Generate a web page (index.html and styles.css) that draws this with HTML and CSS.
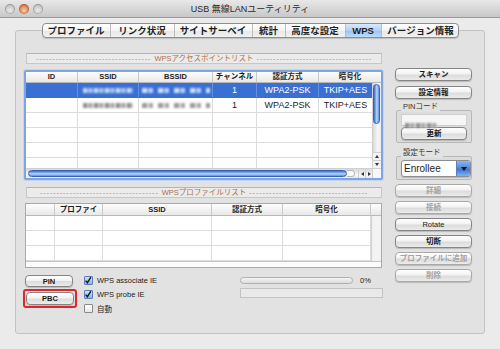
FILE: index.html
```html
<!DOCTYPE html>
<html lang="ja">
<head>
  <meta charset="UTF-8">
  <title>USB 無線LANユーティリティ</title>
  <link rel="stylesheet" href="styles.css">
</head>
<body>
  <div class="titlebar">
    <div class="lights">
      <span class="light"></span>
      <span class="light close"></span>
      <span class="light"></span>
    </div>
    <div class="title">USB 無線LANユーティリティ</div>
    <div></div>
  </div>

  <div class="tabs">
    <div class="tab">プロファイル</div>
    <div class="tab">リンク状況</div>
    <div class="tab">サイトサーベイ</div>
    <div class="tab">統計</div>
    <div class="tab">高度な設定</div>
    <div class="tab active">WPS</div>
    <div class="tab">バージョン情報</div>
  </div>

  <div class="panel">
    <div class="left">
      <div class="list-title">
        <span class="dashes">-----------------------------------</span>
        <span>WPSアクセスポイントリスト</span>
        <span class="dashes">-----------------------------------</span>
      </div>

      <div class="ap-table">
        <div class="thead ap-cols">
          <div>ID</div><div>SSID</div><div>BSSID</div><div>チャンネル</div><div>認証方式</div><div>暗号化</div>
        </div>
        <div class="tbody">
          <div class="row ap-cols selected">
            <div></div>
            <div><span class="blur"></span></div>
            <div><span class="blur mac"></span></div>
            <div>1</div><div>WPA2-PSK</div><div>TKIP+AES</div>
          </div>
          <div class="row ap-cols">
            <div></div>
            <div><span class="blur"></span></div>
            <div><span class="blur mac"></span></div>
            <div>1</div><div>WPA2-PSK</div><div>TKIP+AES</div>
          </div>
          <div class="row ap-cols"><div></div><div></div><div></div><div></div><div></div><div></div></div>
          <div class="row ap-cols"><div></div><div></div><div></div><div></div><div></div><div></div></div>
          <div class="row ap-cols"><div></div><div></div><div></div><div></div><div></div><div></div></div>
          <div class="row ap-cols"><div></div><div></div><div></div><div></div><div></div><div></div></div>
        </div>
        <div class="vscroll">
          <div class="vthumb"></div>
          <div class="arrows-v">
            <span class="arrow up"></span>
            <span class="arrow down"></span>
          </div>
        </div>
        <div class="hscroll">
          <div class="hthumb"></div>
          <div class="htrack-end"></div>
          <div class="arrows-h">
            <span class="arrow left"></span>
            <span class="arrow right"></span>
          </div>
        </div>
        <div class="corner"></div>
      </div>

      <div class="list-title second">
        <span class="dashes">------------------------------------</span>
        <span>WPSプロファイルリスト</span>
        <span class="dashes">------------------------------------</span>
      </div>

      <div class="profile-table">
        <div class="thead pf-cols">
          <div></div><div>プロファイ</div><div>SSID</div><div>認証方式</div><div>暗号化</div><div></div>
        </div>
        <div class="pf-body">
          <div class="row pf-cols"><div></div><div></div><div></div><div></div><div></div></div>
          <div class="row pf-cols"><div></div><div></div><div></div><div></div><div></div></div>
          <div class="row pf-cols"><div></div><div></div><div></div><div></div><div></div></div>
        </div>
        <div class="pf-side"></div>
        <div class="pf-bottom"></div>
      </div>

      <div class="wps-bottom">
        <div class="wps-buttons">
          <button class="btn pin-btn">PIN</button>
          <div class="pbc-mark"><button class="btn">PBC</button></div>
        </div>
        <div class="checks">
          <div class="check">
            <span class="box checked"><svg width="9" height="9" viewBox="0 0 9 9"><path d="M1.8 4.6 L3.8 7 L7.8 0.8" fill="none" stroke="#1b1b1b" stroke-width="1.6"/></svg></span>
            WPS associate IE
          </div>
          <div class="check">
            <span class="box checked"><svg width="9" height="9" viewBox="0 0 9 9"><path d="M1.8 4.6 L3.8 7 L7.8 0.8" fill="none" stroke="#1b1b1b" stroke-width="1.6"/></svg></span>
            WPS probe IE
          </div>
          <div class="check">
            <span class="box"></span>
            自動
          </div>
        </div>
        <div class="status">
          <div class="progress-row">
            <div class="progress"></div>
            <span class="pct">0%</span>
          </div>
          <div class="status-field"></div>
        </div>
      </div>
    </div>

    <div class="side">
      <button class="btn">スキャン</button>
      <button class="btn gap-5">設定情報</button>

      <div class="group pin-group">
        <div class="group-title"><span>PINコード</span></div>
        <div class="group-box">
          <div class="pin-field"><span class="blur pin-blur"></span></div>
          <button class="btn renew">更新</button>
        </div>
      </div>

      <div class="group mode-group">
        <div class="group-title"><span>設定モード</span></div>
        <div class="group-box">
          <div class="select">
            <span class="select-text">Enrollee</span>
            <span class="select-arrow"></span>
          </div>
        </div>
      </div>

      <button class="btn gap-4" disabled>詳細</button>
      <button class="btn gap-4" disabled>接続</button>
      <button class="btn gap-4 plain">Rotate</button>
      <button class="btn gap-4">切断</button>
      <button class="btn gap-4" disabled>プロファイルに追加</button>
      <button class="btn gap-4" disabled>削除</button>
    </div>
  </div>
</body>
</html>
```

FILE: styles.css
```css
* {
  box-sizing: border-box;
}
body {
  margin: 0;
  width: 500px;
  height: 349px;
  overflow: hidden;
  background-color: #ebebeb;
  font-family: "Liberation Sans", "Noto Sans CJK JP", sans-serif;
  color: #1e1e1e;
}

/* window title */
.titlebar {
  height: 18px;
  display: grid;
  grid-template-columns: 1fr auto 1fr;
  align-items: center;
  background: linear-gradient(#e8e8e8, #c8c8c8);
  border-bottom: 1px solid #9a9a9a;
}
.lights {
  display: flex;
  gap: 4px;
  padding-left: 5px;
}
.light {
  width: 10px;
  height: 10px;
  border-radius: 50%;
  background: radial-gradient(circle at 50% 65%, #ececec, #c6c6c6 60%, #a2a2a2);
  box-shadow: inset 0 0 0 1px rgba(0, 0, 0, 0.18);
}
.light.close {
  background: radial-gradient(circle at 50% 65%, #f9cfa8, #e07d50 60%, #b0502c);
}
.title {
  font-size: 9px;
  color: #2a2a2a;
}

/* tabs */
.tabs {
  position: relative;
  display: grid;
  grid-template-columns: 67px 64px 78px 33px 60px 36px 79px;
  width: 417px;
  height: 15px;
  margin: 5px auto -8px;
  overflow: hidden;
  background: linear-gradient(#ffffff, #f4f4f4 50%, #e7e7e7 51%, #f1f1f1);
  border: 1px solid #8d8d8d;
  border-radius: 4px;
  box-shadow: 0 1px 1px rgba(0, 0, 0, 0.15);
}
.tab {
  font-size: 9.5px;
  font-weight: bold;
  line-height: 13px;
  text-align: center;
  white-space: nowrap;
  border-left: 1px solid #bcbcbc;
}
.tab:first-child {
  border-left: 0;
}
.tab.active {
  background: linear-gradient(#d9eafc, #b0d1f6 50%, #97c2f2 51%, #bcdcfb);
}

/* main panel */
.panel {
  display: flex;
  gap: 12px;
  height: 304px;
  margin: 0 15px;
  padding: 22px 12px 0 8px;
  background-color: #e2e2e2;
  border: 1px solid #c2c2c2;
  border-radius: 3px;
}
.left {
  width: 359px;
}
.side {
  width: 77px;
  padding-top: 15px;
  display: flex;
  flex-direction: column;
}

.list-title {
  display: flex;
  align-items: center;
  justify-content: center;
  gap: 3px;
  height: 11px;
  margin: 0 1px 0 2px;
  font-size: 7.5px;
  line-height: 9px;
  color: #a8734c;
  white-space: nowrap;
  background-color: #ebebeb;
  border: 1px solid #c7c7c7;
  border-top-color: #b5b5b5;
}
.list-title.second {
  margin-top: 7px;
}
.dashes {
  letter-spacing: 0.8px;
  color: #b88d6c;
}

/* access point table */
.ap-table {
  display: grid;
  grid-template-columns: 1fr 9px;
  grid-template-rows: 11px 1fr 10px;
  height: 110px;
  margin-top: 6px;
  font-size: 9px;
  background-color: #fff;
  border: 2px solid #7fa4e4;
  border-radius: 2px;
  box-shadow: 0 0 0 1px #c3d5f2;
}
.ap-cols {
  display: grid;
  grid-template-columns: 52px 61px 74px 44px 62px 1fr;
}
.pf-cols {
  display: grid;
  grid-template-columns: 29px 48px 109px 71px 88px 1fr;
}
.thead {
  grid-column: 1 / -1;
  font-size: 7.5px;
  font-weight: bold;
  line-height: 10px;
  text-align: center;
  background: linear-gradient(#fdfdfd, #e8e8e8);
  border-bottom: 1px solid #b8b8b8;
}
.thead > div {
  border-right: 1px solid #c9c9c9;
}
.thead > div:last-child {
  border-right: 0;
}
.tbody {
  overflow: hidden;
}
.row {
  height: 15px;
  line-height: 14px;
  text-align: center;
  border-bottom: 1px solid #dcdcdc;
}
.row > div {
  border-right: 1px solid #dcdcdc;
}
.ap-cols.row > div:last-child {
  border-right: 0;
}
.row.selected {
  color: #fff;
  background-color: #3a6fd4;
  border-bottom-color: #3a6fd4;
}
.row.selected > div {
  border-right-color: #6590df;
}

.blur {
  display: inline-block;
  width: 50px;
  height: 5px;
  vertical-align: middle;
  background: repeating-linear-gradient(90deg, #8e8e8e 0 4px, #c8c8c8 4px 6px, #a2a2a2 6px 9px, #dedede 9px 11px);
  filter: blur(0.8px);
}
.blur.mac {
  width: 68px;
  background: repeating-linear-gradient(90deg, #9a9a9a 0 5px, #e2e2e2 5px 7px, #a8a8a8 7px 11px, #ffffff 11px 16px);
}
.selected .blur {
  background: repeating-linear-gradient(90deg, #c8d7f4 0 4px, #86a8e6 4px 6px, #b3c8f0 6px 9px, #6f97e0 9px 11px);
}
.selected .blur.mac {
  background: repeating-linear-gradient(90deg, #d2dff7 0 5px, #7fa2e4 5px 7px, #bccff2 7px 11px, #3a6fd4 11px 16px);
}

/* scrollbars */
.vscroll {
  display: flex;
  flex-direction: column;
  background: linear-gradient(90deg, #d9d9d9, #f7f7f7 60%, #ececec);
  border-left: 1px solid #d0d0d0;
}
.vthumb {
  width: 7px;
  height: 40px;
  margin-top: 1px;
  background: linear-gradient(90deg, #3c6dc4, #8fb6ee 40%, #b8d2f6 55%, #5f92e0);
  border: 1px solid #3763b5;
  border-radius: 4px;
}
.arrows-v {
  margin-top: auto;
  background-color: #f3f3f3;
}
.arrows-h {
  display: flex;
  margin-left: auto;
}
.arrow {
  display: flex;
  align-items: center;
  justify-content: center;
  width: 8px;
  height: 8px;
  border-top: 1px solid #cfcfcf;
}
.arrows-h .arrow {
  width: 7px;
  border-top: 0;
  border-left: 1px solid #cfcfcf;
}
.arrow::before {
  content: "";
  border: 2px solid transparent;
}
.arrow.up::before {
  border-top-width: 0;
  border-bottom: 3px solid #333;
}
.arrow.down::before {
  border-bottom-width: 0;
  border-top: 3px solid #333;
}
.arrow.left::before {
  border-left-width: 0;
  border-right: 3px solid #333;
}
.arrow.right::before {
  border-right-width: 0;
  border-left: 3px solid #333;
}
.hscroll {
  display: flex;
  align-items: center;
  padding-left: 2px;
  background: linear-gradient(#d9d9d9, #f7f7f7 60%, #ececec);
  border-top: 1px solid #d0d0d0;
}
.hthumb {
  width: 319px;
  height: 7px;
  background: linear-gradient(#3c6dc4, #8fb6ee 40%, #b8d2f6 55%, #5f92e0);
  border: 1px solid #3763b5;
  border-radius: 4px;
}
.htrack-end {
  width: 8px;
  height: 7px;
  background-color: #fafafa;
  border: 1px solid #b9b9b9;
  border-left: 0;
  border-radius: 0 4px 4px 0;
}
.corner {
  background-color: #f7f7f7;
  border-top: 1px solid #d0d0d0;
  border-left: 1px solid #d0d0d0;
}

/* profile table */
.profile-table {
  display: grid;
  grid-template-columns: 1fr 10px;
  grid-template-rows: 12px 45px 1fr;
  height: 65px;
  margin: 5px 1px 0;
  font-size: 9px;
  background-color: #f2f2f2;
  border: 1px solid #a9a9a9;
}
.profile-table .thead {
  line-height: 11px;
}
.pf-body {
  background-color: #fff;
}
.pf-side {
  background-color: #f3f3f3;
  box-shadow: inset 1px 0 1px rgba(0, 0, 0, 0.15);
}
.pf-bottom {
  grid-column: 1 / -1;
  background-color: #fbfbfb;
  border-top: 1px solid #c5c5c5;
}

/* buttons */
.btn {
  display: block;
  width: 100%;
  height: 13px;
  padding: 0;
  font-family: inherit;
  font-size: 7.5px;
  font-weight: bold;
  line-height: 11px;
  color: #1a1a1a;
  text-align: center;
  white-space: nowrap;
  background: linear-gradient(#ffffff, #f2f2f2 45%, #dcdcdc 55%, #ebebeb);
  border: 1px solid #858585;
  border-radius: 4px;
  box-shadow: 0 1px 1px rgba(0, 0, 0, 0.18);
}
.btn.plain {
  font-weight: normal;
}
.btn:disabled {
  color: #a3a3a3;
  border-color: #a9a9a9;
}
.gap-5 {
  margin-top: 5px;
}
.gap-4 {
  margin-top: 4px;
}

/* group boxes */
.group {
  margin-left: 1px;
}
.pin-group {
  margin-top: 3px;
}
.mode-group {
  margin-top: 5px;
}
.group-title {
  height: 10px;
  padding-left: 5px;
  font-size: 7.5px;
  line-height: 10px;
  color: #333;
}
.group-title span {
  display: inline-block;
  padding: 0 2px;
  background-color: #e2e2e2;
}
.group-box {
  margin-top: -2px;
  padding: 3px 4px 2px 4px;
  background-color: #dcdcdc;
  border: 1px solid #b8b8b8;
  border-radius: 2px;
}
.mode-group .group-box {
  padding-right: 0;
}
.pin-field {
  height: 12px;
  padding-left: 3px;
  background-color: #f6f6f6;
  border: 1px solid #cfcfcf;
}
.pin-blur {
  width: 32px;
  vertical-align: 1px;
}
.renew {
  margin-top: 1px;
}
.select {
  display: flex;
  align-items: center;
  height: 17px;
  padding-left: 2px;
  font-size: 10px;
  background-color: #fff;
  border: 1px solid #8d8d8d;
  border-radius: 3px;
  box-shadow: 0 1px 1px rgba(0, 0, 0, 0.15);
  overflow: hidden;
}
.select-text {
  flex: 1;
}
.select-arrow {
  display: flex;
  align-items: center;
  justify-content: center;
  align-self: stretch;
  width: 14px;
  background: linear-gradient(#8db8f0, #4a86de 50%, #3372d4 51%, #80b2f2);
  border-left: 1px solid #5b7fb8;
}
.select-arrow::before {
  content: "";
  border-left: 3px solid transparent;
  border-right: 3px solid transparent;
  border-top: 4px solid #111;
}

/* bottom controls */
.wps-bottom {
  display: flex;
  margin-top: 7px;
}
.wps-buttons {
  width: 54px;
}
.pin-btn {
  width: 48px;
  height: 12px;
  margin-left: 1px;
}
.pbc-mark {
  width: 54px;
  margin: 2px 0 0 -1px;
  padding: 1px;
  border: 2px solid #e3242b;
  border-radius: 3px;
}
.checks {
  width: 156px;
  margin: -2px 0 0 6px;
}
.check {
  display: flex;
  align-items: center;
  gap: 4px;
  height: 14px;
  font-size: 7.5px;
  color: #222;
}
.box {
  display: flex;
  width: 9px;
  height: 9px;
  background: linear-gradient(#ffffff, #e6e6e6);
  border: 1px solid #8a8a8a;
  border-radius: 1px;
}
.box.checked {
  background: linear-gradient(#cfe2fa, #8ab4ec);
  border-color: #5b7fb8;
}
.box svg {
  margin: -1px 0 0 -1px;
}
.status {
  flex: 1;
  padding-top: 1px;
}
.progress-row {
  display: flex;
  align-items: center;
  height: 9px;
}
.progress {
  width: 113px;
  height: 7px;
  background: linear-gradient(#f4f4f4, #dcdcdc);
  border: 1px solid #b0b0b0;
  border-radius: 4px;
}
.pct {
  margin-left: 7px;
  font-size: 7.5px;
}
.status-field {
  height: 10px;
  margin-top: 3px;
  background-color: #e9e9e9;
  border: 1px solid #c3c3c3;
}
```
